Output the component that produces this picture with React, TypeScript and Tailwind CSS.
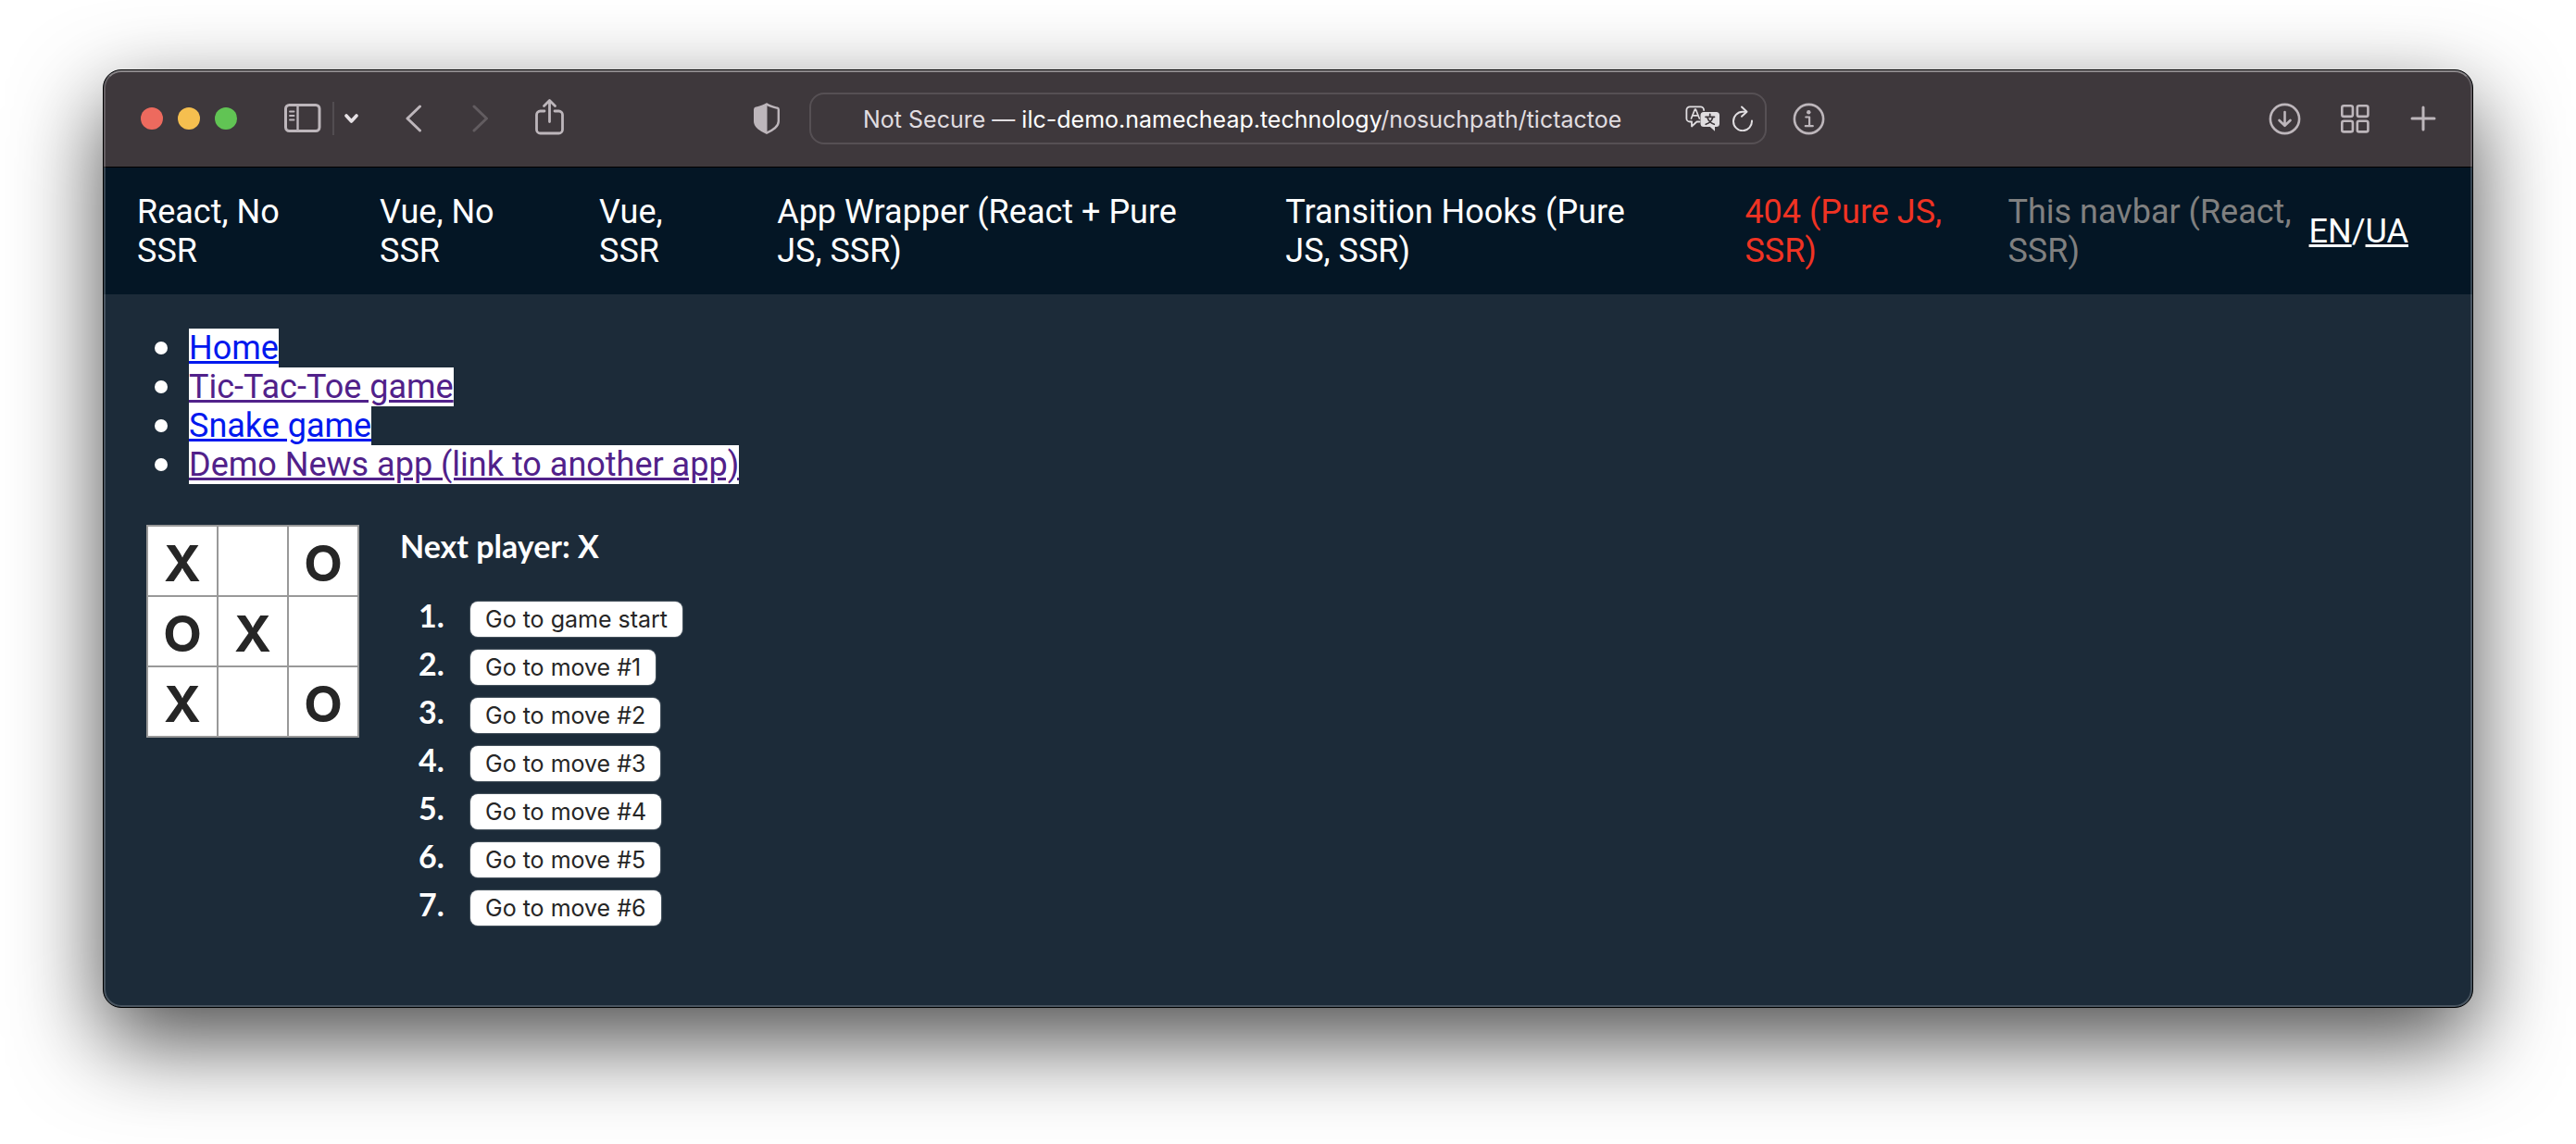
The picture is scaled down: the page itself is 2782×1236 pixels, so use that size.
import React from "react";

const navItems = [
  { lines: ["React, No", "SSR"], color: "text-white" },
  { lines: ["Vue, No", "SSR"], color: "text-white" },
  { lines: ["Vue,", "SSR"], color: "text-white" },
  { lines: ["App Wrapper (React + Pure", "JS, SSR)"], color: "text-white" },
  { lines: ["Transition Hooks (Pure", "JS, SSR)"], color: "text-white" },
  { lines: ["404 (Pure JS,", "SSR)"], color: "text-[#f03323]" },
  { lines: ["This navbar (React,", "SSR)"], color: "text-[#808080]" },
];

const links = [
  { label: "Home", color: "text-[#0018ee]" },
  { label: "Tic-Tac-Toe game", color: "text-[#51218a]" },
  { label: "Snake game", color: "text-[#0018ee]" },
  { label: "Demo News app (link to another app)", color: "text-[#51218a]" },
];

const squares = ["X", "", "O", "O", "X", "", "X", "", "O"];

const moves = [
  "Go to game start",
  "Go to move #1",
  "Go to move #2",
  "Go to move #3",
  "Go to move #4",
  "Go to move #5",
  "Go to move #6",
];

function IconButton({
  label,
  className = "",
  children,
}: {
  label: string;
  className?: string;
  children: React.ReactNode;
}) {
  return (
    <button type="button" aria-label={label} className={`shrink-0 ${className}`}>
      {children}
    </button>
  );
}

const stroke = {
  fill: "none",
  stroke: "currentColor",
  strokeLinecap: "round" as const,
  strokeLinejoin: "round" as const,
};

function Toolbar() {
  return (
    <header className="grid h-[105px] grid-cols-[702fr_1157fr_699fr] items-center border-b border-black bg-[#3e383c] text-[#bdb6bb]">
      <div className="flex items-center pl-10">
        <div className="flex gap-4">
          <IconButton label="Close" className="size-6 rounded-full bg-[#ed6a5e]">{null}</IconButton>
          <IconButton label="Minimize" className="size-6 rounded-full bg-[#f5bf4f]">{null}</IconButton>
          <IconButton label="Zoom" className="size-6 rounded-full bg-[#61c454]">{null}</IconButton>
        </div>
        <IconButton label="Sidebar" className="ml-[51px]">
          <svg width="40" height="32" viewBox="0 0 40 32" className="block" {...stroke} strokeWidth="3">
            <rect x="1.5" y="1.5" width="36.5" height="28" rx="4" />
            <path d="M14.5 1.5v28" strokeWidth="2.4" />
            <path d="M6 8.5h4.500M6 13h4.500M6 17.500h4.500" strokeWidth="1.900" />
          </svg>
        </IconButton>
        <div className="ml-3 h-9 w-0.5 bg-[#524d51]" />
        <IconButton label="Tab groups" className="ml-[11px] text-[#e6e1e5]">
          <svg width="16" height="12" viewBox="0 0 16 12" className="block" {...stroke} strokeWidth="3.6">
            <path d="M2 3l5.500 6L13 3" />
          </svg>
        </IconButton>
        <IconButton label="Back" className="ml-[50px]">
          <svg width="18" height="30" viewBox="0 0 18 30" className="block" {...stroke} strokeWidth="3">
            <path d="M15.500 2L2 15l13.500 13" />
          </svg>
        </IconButton>
        <IconButton label="Forward" className="ml-[54px] text-[#625c60]">
          <svg width="18" height="30" viewBox="0 0 18 30" className="block" {...stroke} strokeWidth="3">
            <path d="M2 2l13.500 13L2 28" />
          </svg>
        </IconButton>
        <IconButton label="Share" className="ml-[50px] pb-1">
          <svg width="32" height="40" viewBox="0 0 32 40" className="block" {...stroke} strokeWidth="2.800">
            <path d="M10 14H5.500a4 4 0 0 0-4 4v16a4 4 0 0 0 4 4h20a4 4 0 0 0 4-4V18a4 4 0 0 0-4-4H21" />
            <path d="M15.500 25.500V3M9.500 8.500l6-6 6 6" />
          </svg>
        </IconButton>
      </div>

      <div className="flex items-center">
        <IconButton label="Privacy report">
          <svg width="28" height="34" viewBox="0 0 28 34" className="block" {...stroke} strokeWidth="2.400">
            <path d="M14 1.500c3.500 2.500 7.500 3.300 11.500 4.200 1 .3 1.300.8 1.300 1.800v12.500c0 6-6 9.500-12.800 12.700C7.200 29.500 1.200 26 1.200 20V7.500c0-1 .3-1.500 1.300-1.800C6.500 4.800 10.500 4 14 1.500z" />
            <path d="M14 1.500v31.200C7.200 29.500 1.200 26 1.200 20V7.500c0-1 .3-1.500 1.300-1.800C6.500 4.800 10.500 4 14 1.500z" fill="currentColor" strokeWidth="1" />
          </svg>
        </IconButton>
        <div className="ml-8 flex h-14 min-w-0 flex-1 items-center rounded-2xl border-2 border-[#565054] pr-3 font-['Inter'] text-[25px] leading-8 text-[#e0dde0]">
          <p className="min-w-0 flex-1 truncate pt-0.5 pl-14">
            Not Secure — <span className="text-white">ilc-demo.namecheap.technology</span>/nosuchpath/tictactoe
          </p>
          <IconButton label="Translate">
            <svg width="38" height="28" viewBox="0 0 38 28" className="block">
              <path
                d="M15.500 17.500H12.500L7 22.500v-5H5a3.600 3.600 0 0 1-3.600-3.600V5A3.600 3.600 0 0 1 5 1.400h11.500A3.600 3.600 0 0 1 20.100 5"
                {...stroke}
                strokeWidth="1.800"
              />
              <path d="M6.500 14l4-10h.8l4 10M8 10.800h5.800" {...stroke} strokeWidth="1.700" />
              <path
                d="M20 7h13.500A3.500 3.500 0 0 1 37 10.500v9a3.500 3.500 0 0 1-3.500 3.500H32v4.800L26.800 23H20a3.500 3.500 0 0 1-3.500-3.500v-9A3.500 3.500 0 0 1 20 7z"
                fill="currentColor"
              />
              <path
                d="M26.700 9.300v2M22 12.300h9.500M24 13c1 3.300 3.500 6 7.300 7.300M29.700 13c-1 3.300-3.500 6-7.500 7.300"
                fill="none"
                stroke="#3e383c"
                strokeWidth="1.700"
                strokeLinecap="round"
              />
            </svg>
          </IconButton>
          <IconButton label="Reload" className="ml-3">
            <svg width="24" height="28" viewBox="0 0 24 28" className="block" {...stroke} strokeWidth="2">
              <path d="M15.500 6.800H12A10 10.200 0 1 0 22 16.500" />
              <path d="M11 1.500l5.500 5.300-5.500 5" />
            </svg>
          </IconButton>
        </div>
        <IconButton label="Page info" className="ml-7">
          <svg width="35" height="35" viewBox="0 0 35 35" className="block" {...stroke} strokeWidth="2.600">
            <circle cx="17.500" cy="17.500" r="15.600" />
            <circle cx="17.300" cy="10.300" r="2.200" fill="currentColor" stroke="none" />
            <path d="M14.300 15.500h3.800v9.500M13.800 25.200h8" strokeWidth="2.200" />
          </svg>
        </IconButton>
      </div>

      <div className="flex items-center justify-end pr-[39px]">
        <IconButton label="Downloads">
          <svg width="35" height="35" viewBox="0 0 35 35" className="block" {...stroke} strokeWidth="2.600">
            <circle cx="17.500" cy="17.500" r="15.600" />
            <path d="M17.500 10v14.500M11.500 19l6 5.800 6-5.800" />
          </svg>
        </IconButton>
        <IconButton label="Tab overview" className="ml-[43px]">
          <svg width="31" height="31" viewBox="0 0 31 31" className="block" {...stroke} strokeWidth="2.600">
            <rect x="1.300" y="1.300" width="11.600" height="11.600" rx="2" />
            <rect x="17.800" y="1.300" width="11.600" height="11.600" rx="2" />
            <rect x="1.300" y="17.800" width="11.600" height="11.600" rx="2" />
            <rect x="17.800" y="17.800" width="11.600" height="11.600" rx="2" />
          </svg>
        </IconButton>
        <IconButton label="New tab" className="ml-11">
          <svg width="28" height="28" viewBox="0 0 28 28" className="block" {...stroke} strokeWidth="3">
            <path d="M14 2v24M2 14h24" />
          </svg>
        </IconButton>
      </div>
    </header>
  );
}

function Navbar() {
  return (
    <nav className="flex h-[137px] items-center bg-[#041625] pr-[69px] pl-9">
      <div className="grid flex-1 grid-cols-[262fr_237fr_192fr_549fr_496fr_284fr_325fr]">
        {navItems.map((item) => (
          <a key={item.lines.join(" ")} href="#" className={`whitespace-nowrap ${item.color}`}>
            {item.lines[0]}
            <br />
            {item.lines[1]}
          </a>
        ))}
      </div>
      <div className="shrink-0">
        <a href="#" className="underline">EN</a>/<a href="#" className="underline">UA</a>
      </div>
    </nav>
  );
}

function Game() {
  return (
    <div className="mt-11 flex pl-[46px]">
      <div className="grid grid-cols-3 self-start border-t-2 border-l-2 border-[#999]">
        {squares.map((value, i) => (
          <button
            key={i}
            type="button"
            aria-label={`Square ${i + 1}`}
            className="size-[76px] border-r-2 border-b-2 border-[#999] bg-white pt-1 font-['Inter'] text-[54px] leading-[72px] font-bold text-[#262626]"
          >
            {value}
          </button>
        ))}
      </div>
      <div className="ml-11 font-['Lato'] font-bold">
        <div className="mt-0.5 text-[34px] leading-[42px]">Next player: X</div>
        <ol className="mt-7 list-decimal pl-14 text-[34px] leading-[52px]">
          {moves.map((move) => (
            <li key={move} className="h-[52px] pl-5">
              <button
                type="button"
                className="h-[38px] rounded-lg bg-white px-4 font-['Inter'] text-[25px] leading-[38px] font-normal text-[#262626] shadow-[0_0_1px_1px_rgba(255,255,255,0.2)]"
              >
                {move}
              </button>
            </li>
          ))}
        </ol>
      </div>
    </div>
  );
}

export default function App() {
  return (
    <div className="min-h-screen overflow-hidden bg-white px-[111px] pt-[75px] pb-[147px]">
      <div className="relative overflow-hidden rounded-[20px] border border-black bg-[#1c2b39] font-['Roboto'] text-[36px] leading-[42px] text-white shadow-[0_36px_96px_rgba(0,0,0,0.7)]">
        <Toolbar />
        <Navbar />
        <main className="pt-[37px] pb-[85px]">
          <ul className="pl-[55px]">
            {links.map((link) => (
              <li
                key={link.label}
                className="flex items-center gap-[23px] before:size-[14px] before:rounded-full before:bg-white before:content-['']"
              >
                <a href="#" className={`bg-white underline ${link.color}`}>
                  {link.label}
                </a>
              </li>
            ))}
          </ul>
          <Game />
        </main>
        <div className="pointer-events-none absolute inset-0 rounded-[19px] border-2 border-white/20 border-t-white/40" />
      </div>
    </div>
  );
}
